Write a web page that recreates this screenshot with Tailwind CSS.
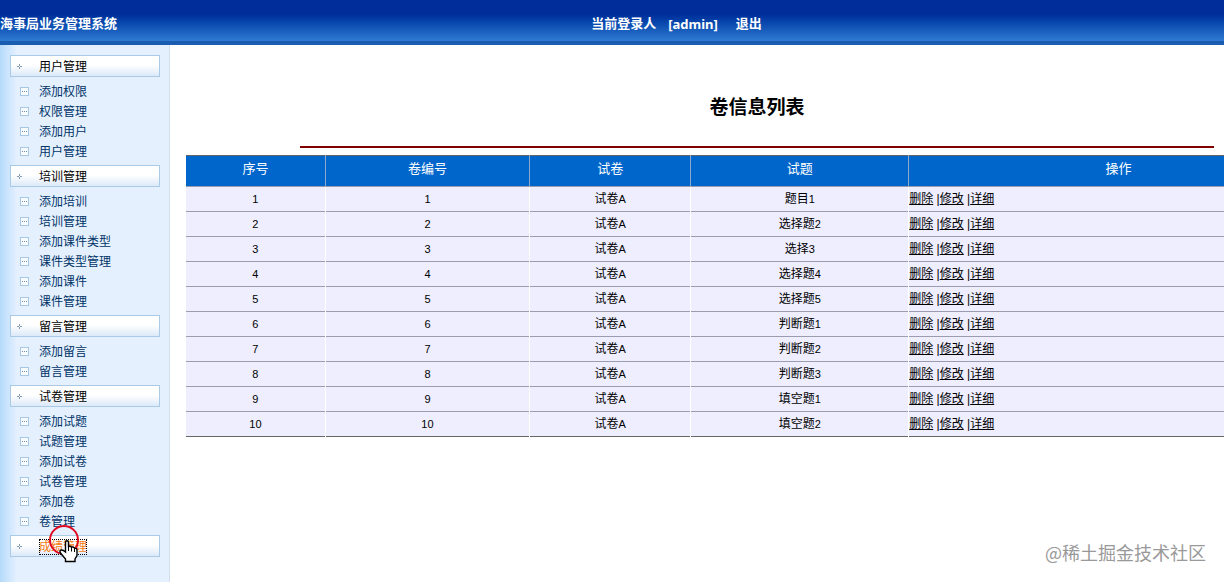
<!DOCTYPE html>
<html lang="zh-CN">
<head>
<meta charset="utf-8">
<title>海事局业务管理系统</title>
<script src="https://cdn.jsdelivr.net/npm/@tailwindcss/browser@4"></script>
</head>
<body class="flex h-screen flex-col overflow-hidden bg-white font-['Liberation_Sans','Noto_Sans_CJK_SC',sans-serif] text-[12px] leading-5 text-black">
<header class="flex h-[45px] shrink-0 items-center border-b-4 border-[#1a5cb0] bg-linear-to-b from-[#002d9a] from-35% to-[#2f7bd3] pt-1.5 text-[13px] font-bold text-white">
  <h1 class="w-[48.3%] shrink-0">海事局业务管理系统</h1>
  <div class="flex whitespace-nowrap">
    <span>当前登录人</span>
    <span class="ml-3 font-['Noto_Sans',sans-serif]">[admin]</span>
    <a href="#" class="ml-[18px]">退出</a>
  </div>
</header>
<div class="flex min-h-0 flex-1">
  <nav id="menu" class="w-[170px] shrink-0 border-r border-[#d3e0ef] bg-linear-to-r from-[#b5dafa] via-[#e5f0ff] via-10% to-[#e5f0ff] pt-2.5 pr-[9px] pl-2.5 text-[#003366]"></nav>
  <main class="min-w-0 flex-1 overflow-hidden pl-4">
    <div class="w-[110%]">
      <h2 class="pt-[51px] text-center text-[19px] leading-6 font-bold">卷信息列表</h2>
      <hr class="mx-auto mt-[26px] mb-[7px] w-4/5 border-t-2 border-[#800000]">
      <table class="w-full table-fixed border-collapse border-y border-[#666] text-center">
        <colgroup><col class="w-[12.2%]"><col class="w-[17.9%]"><col class="w-[14.1%]"><col class="w-[19.1%]"><col></colgroup>
        <thead class="bg-[#0066cc] text-[13px] text-white">
          <tr class="h-[31px]">
            <th class="border-r border-[#8fa9c8] pb-1 font-normal">序号</th>
            <th class="border-r border-[#8fa9c8] pb-1 font-normal">卷编号</th>
            <th class="border-r border-[#8fa9c8] pb-1 font-normal">试卷</th>
            <th class="border-r border-[#8fa9c8] pb-1 font-normal">试题</th>
            <th class="pb-1 font-normal">操作</th>
          </tr>
        </thead>
        <tbody id="rows" class="bg-[#eeeeff]"></tbody>
      </table>
    </div>
  </main>
</div>
<p class="absolute right-[18px] bottom-[18px] text-[18px] leading-6 text-[#999] font-['Noto_Sans_CJK_SC',sans-serif]">@稀土掘金技术社区</p>
<svg class="pointer-events-none absolute top-[522px] left-[46px] h-[42px] w-9" viewBox="0 0 36 42" fill="none">
  <circle cx="18" cy="18" r="14" stroke="#e00b20" stroke-width="2"/>
  <path d="M19.500 30V20.500q0-1.700 1.500-1.700t1.500 1.700v4q2-.9 3 .6 2-.5 3 1 2.500-.2 2.500 2.400v5l-2 3.500v2.500h-9.500V37l-5-6q-1.300-2.400.7-3 1.800-.3 4.300 2Z" fill="white" stroke="black" stroke-width="1.400"/>
  <path d="M22.500 24v5M25.500 25v4.500M28.500 26v4" stroke="black"/>
</svg>
<script>
const groups = [
  ['用户管理', ['添加权限', '权限管理', '添加用户', '用户管理']],
  ['培训管理', ['添加培训', '培训管理', '添加课件类型', '课件类型管理', '添加课件', '课件管理']],
  ['留言管理', ['添加留言', '留言管理']],
  ['试卷管理', ['添加试题', '试题管理', '添加试卷', '试卷管理', '添加卷', '卷管理']],
  ['成绩管理', []]
];
const cross = '<svg class="ml-1.5 h-[5px] w-[5px]" viewBox="0 0 5 5" fill="#8299b5" shape-rendering="crispEdges"><path d="M2 0h1v1H2zM2 4h1v1H2zM0 2h1v1H0zM4 2h1v1H4zM1 2h1v1H1zM3 2h1v1H3zM2 1h1v1H2zM2 3h1v1H2z"/></svg>';
const box = '<svg class="ml-2.5 h-[9px] w-[9px]" viewBox="0 0 9 9" shape-rendering="crispEdges"><path fill="#f8fcff" stroke="#a6c8e4" d="M.5.5h8v8h-8z"/><path fill="#6f91b0" d="M2 4h1v1H2zM4 4h1v1H4zM6 4h1v1H6z"/></svg>';
document.getElementById('menu').innerHTML = groups.map(([name, items]) => `
  <section>
    <h3 class="flex h-[22px] items-center border border-[#a9cbe8] bg-linear-to-b from-white from-45% to-[#dce9f8] text-black">${cross}
      <a href="#" class="mt-0.5 ml-[17px] leading-4 ${items.length ? '' : 'text-[#f47b12] outline-1 -outline-offset-1 outline-dotted outline-black'}">${name}</a></h3>
    ${items.length ? `<ul class="py-1">${items.map(t => `<li class="flex h-5 items-center">${box}<a href="#" class="mt-0.5 ml-2.5">${t}</a></li>`).join('')}</ul>` : ''}
  </section>`).join('');
const questions = ['题目1', '选择题2', '选择3', '选择题4', '选择题5', '判断题1', '判断题2', '判断题3', '填空题1', '填空题2'];
document.getElementById('rows').innerHTML = questions.map((q, i) => `
  <tr class="h-[25px] border-t border-[#9c9cb0]">
    ${[i + 1, i + 1, '试卷A', q].map(v => `<td class="border-r border-r-white">${String(v).replace(/[0-9A]+/, '<span class="text-[11px]">$&</span>')}</td>`).join('')}
    <td class="text-left"><a href="#" class="underline">删除</a> |<a href="#" class="underline">修改</a> |<a href="#" class="underline">详细</a></td>
  </tr>`).join('');
</script>
</body>
</html>
